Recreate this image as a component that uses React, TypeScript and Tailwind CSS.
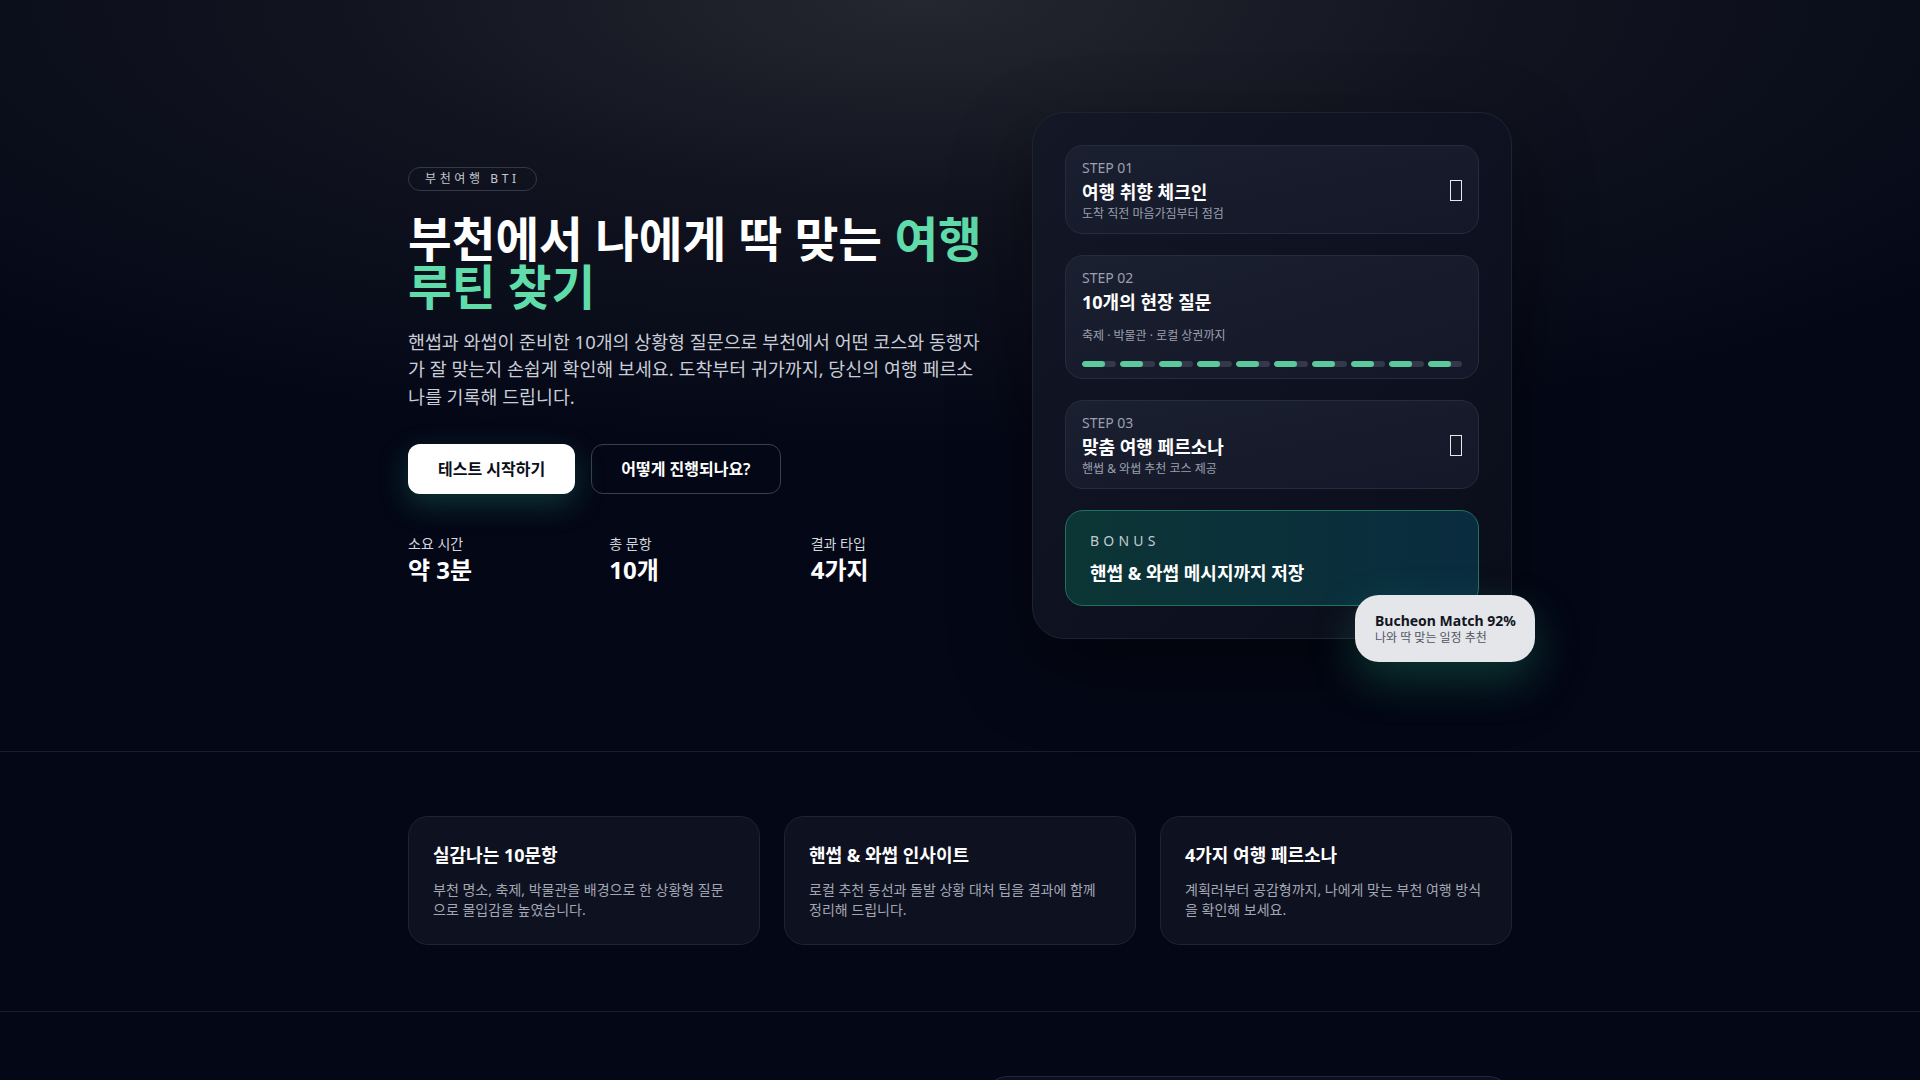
const steps = [
  { step: 'STEP 01', title: '여행 취향 체크인', desc: '도착 직전 마음가짐부터 점검', icon: true },
  { step: 'STEP 02', title: '10개의 현장 질문', desc: '축제 · 박물관 · 로컬 상권까지', progress: true },
  { step: 'STEP 03', title: '맞춤 여행 페르소나', desc: '핸썹 & 와썹 추천 코스 제공', icon: true },
]

const features = [
  { title: '실감나는 10문항', desc: '부천 명소, 축제, 박물관을 배경으로 한 상황형 질문으로 몰입감을 높였습니다.' },
  { title: '핸썹 & 와썹 인사이트', desc: '로컬 추천 동선과 돌발 상황 대처 팁을 결과에 함께 정리해 드립니다.' },
  { title: '4가지 여행 페르소나', desc: '계획러부터 공감형까지, 나에게 맞는 부천 여행 방식을 확인해 보세요.' },
]

const stats = [
  { label: '소요 시간', value: '약 3분' },
  { label: '총 문항', value: '10개' },
  { label: '결과 타입', value: '4가지' },
]

// missing-glyph box, as the emoji shows in the reference
function Tofu() {
  return <span className="block w-3 h-[21px] border-[1.5px] border-white/90 shrink-0" />
}

function StepCard({ s }: { s: (typeof steps)[number] }) {
  return (
    <div
      className={`rounded-[18px] border border-[#272c3d] bg-gradient-to-br from-[#1b2031] to-[#131727] px-4 pt-3 flex items-center ${
        s.progress ? 'pb-[11px]' : 'pb-[10px]'
      }`}
    >
      <div className="flex-1">
        <div className="text-[14px] leading-5 text-[#9aa0ad]">{s.step}</div>
        <div className="text-[18px] leading-[25px] font-bold text-white mt-0.5">{s.title}</div>
        <div className={`text-[12px] leading-[18px] text-[#9aa0ad] ${s.progress ? 'mt-3' : ''}`}>{s.desc}</div>
        {s.progress && (
          <div className="flex gap-1 mt-4">
            {Array.from({ length: 10 }).map((_, i) => (
              <div key={i} className="flex-1 h-1.5 rounded-full bg-[#343949] overflow-hidden">
                <div className="h-full w-[67%] rounded-full bg-[#5cc99d]" />
              </div>
            ))}
          </div>
        )}
      </div>
      {s.icon && <Tofu />}
    </div>
  )
}

export default function App() {
  return (
    <div className="min-h-screen bg-[#040716] text-white font-['Noto_Sans','Noto_Sans_CJK_KR',sans-serif]">
      <section className="border-b border-[#191d2b] bg-[radial-gradient(ellipse_70%_60%_at_48%_0%,#24272f_0%,#11141f_45%,#040716_100%)]">
        <div className="max-w-[1104px] mx-auto py-28 grid grid-cols-[1.2fr_1fr] gap-12 items-center">
          <div>
            <span className="inline-flex items-center h-6 px-4 rounded-full border border-[#33384a] text-[12px] tracking-[0.3em] text-[#c4c8d2]">
              부천여행 BTI
            </span>
            <h1 className="mt-6 text-[47.5px] leading-[48px] font-bold">
              부천에서 나에게 딱 맞는 <span className="text-[#5fdcaa]">여행</span>{' '}
              <span className="text-[#5fdcaa]">루틴 찾기</span>
            </h1>
            <p className="mt-[17px] text-[18.4px] leading-[27.5px] text-[#c9cdd6]">
              핸썹과 와썹이 준비한 10개의 상황형 질문으로 부천에서 어떤 코스와 동행자가 잘 맞는지 손쉽게 확인해 보세요. 도착부터 귀가까지, 당신의 여행 페르소나를 기록해 드립니다.
            </p>
            <div className="mt-[34px] flex gap-4">
              <button className="h-[50px] px-[30px] rounded-xl bg-white text-[#0b0f1a] text-[16px] font-bold shadow-[0_10px_30px_rgba(45,190,150,0.25)]">
                테스트 시작하기
              </button>
              <button className="h-[50px] px-[29px] rounded-xl border border-[#3a3f50] text-white text-[16px] font-semibold">
                어떻게 진행되나요?
              </button>
            </div>
            <div className="mt-10 grid grid-cols-3 gap-7">
              {stats.map((s) => (
                <div key={s.label}>
                  <div className="text-[14px] leading-5 text-[#d4d7de]">{s.label}</div>
                  <div className="text-[24px] leading-8 font-bold">{s.value}</div>
                </div>
              ))}
            </div>
          </div>

          <div className="relative rounded-[32px] border border-[#1e2334] bg-gradient-to-br from-[#131726] to-[#0a0d1a] p-8 shadow-[0_30px_80px_rgba(0,0,0,0.45)]">
            <div className="flex flex-col gap-[21px]">
              {steps.map((s) => (
                <StepCard key={s.step} s={s} />
              ))}
              <div className="rounded-[18px] border border-[#1f735d] bg-gradient-to-r from-[#0c3535] to-[#0a2c3f] px-6 pt-5 pb-5">
                <div className="text-[14px] leading-5 tracking-[0.3em] text-[#c2c9d2]">BONUS</div>
                <div className="mt-2.5 text-[18px] leading-6 font-bold">핸썹 &amp; 와썹 메시지까지 저장</div>
              </div>
            </div>
            <div className="absolute -right-6 -bottom-6 w-[180px] h-[67px] rounded-3xl bg-[#e4e6ea] px-5 flex flex-col justify-center shadow-[0_18px_45px_rgba(40,200,150,0.25)]">
              <div className="text-[14px] leading-[18px] font-bold text-[#111522] whitespace-nowrap">Bucheon Match 92%</div>
              <div className="text-[12px] leading-4 text-[#505663] whitespace-nowrap">나와 딱 맞는 일정 추천</div>
            </div>
          </div>
        </div>
      </section>

      <section className="border-b border-[#191d2b]">
        <div className="max-w-[1104px] mx-auto pt-16 pb-[66px] grid grid-cols-3 gap-6">
          {features.map((f) => (
            <div key={f.title} className="rounded-[20px] border border-[#1f2333] bg-[#0e1120] px-6 pt-[26px] pb-6">
              <h3 className="text-[18px] leading-[25px] font-bold">{f.title}</h3>
              <p className="mt-3 text-[14px] leading-5 text-[#a3a7b3]">{f.desc}</p>
            </div>
          ))}
        </div>
      </section>

      <section>
        <div className="max-w-[1104px] mx-auto py-16 grid grid-cols-2 gap-12">
          <div />
          <div className="h-[320px] rounded-3xl border border-[#22273a] bg-[#0c0f1e]" />
        </div>
      </section>
    </div>
  )
}
